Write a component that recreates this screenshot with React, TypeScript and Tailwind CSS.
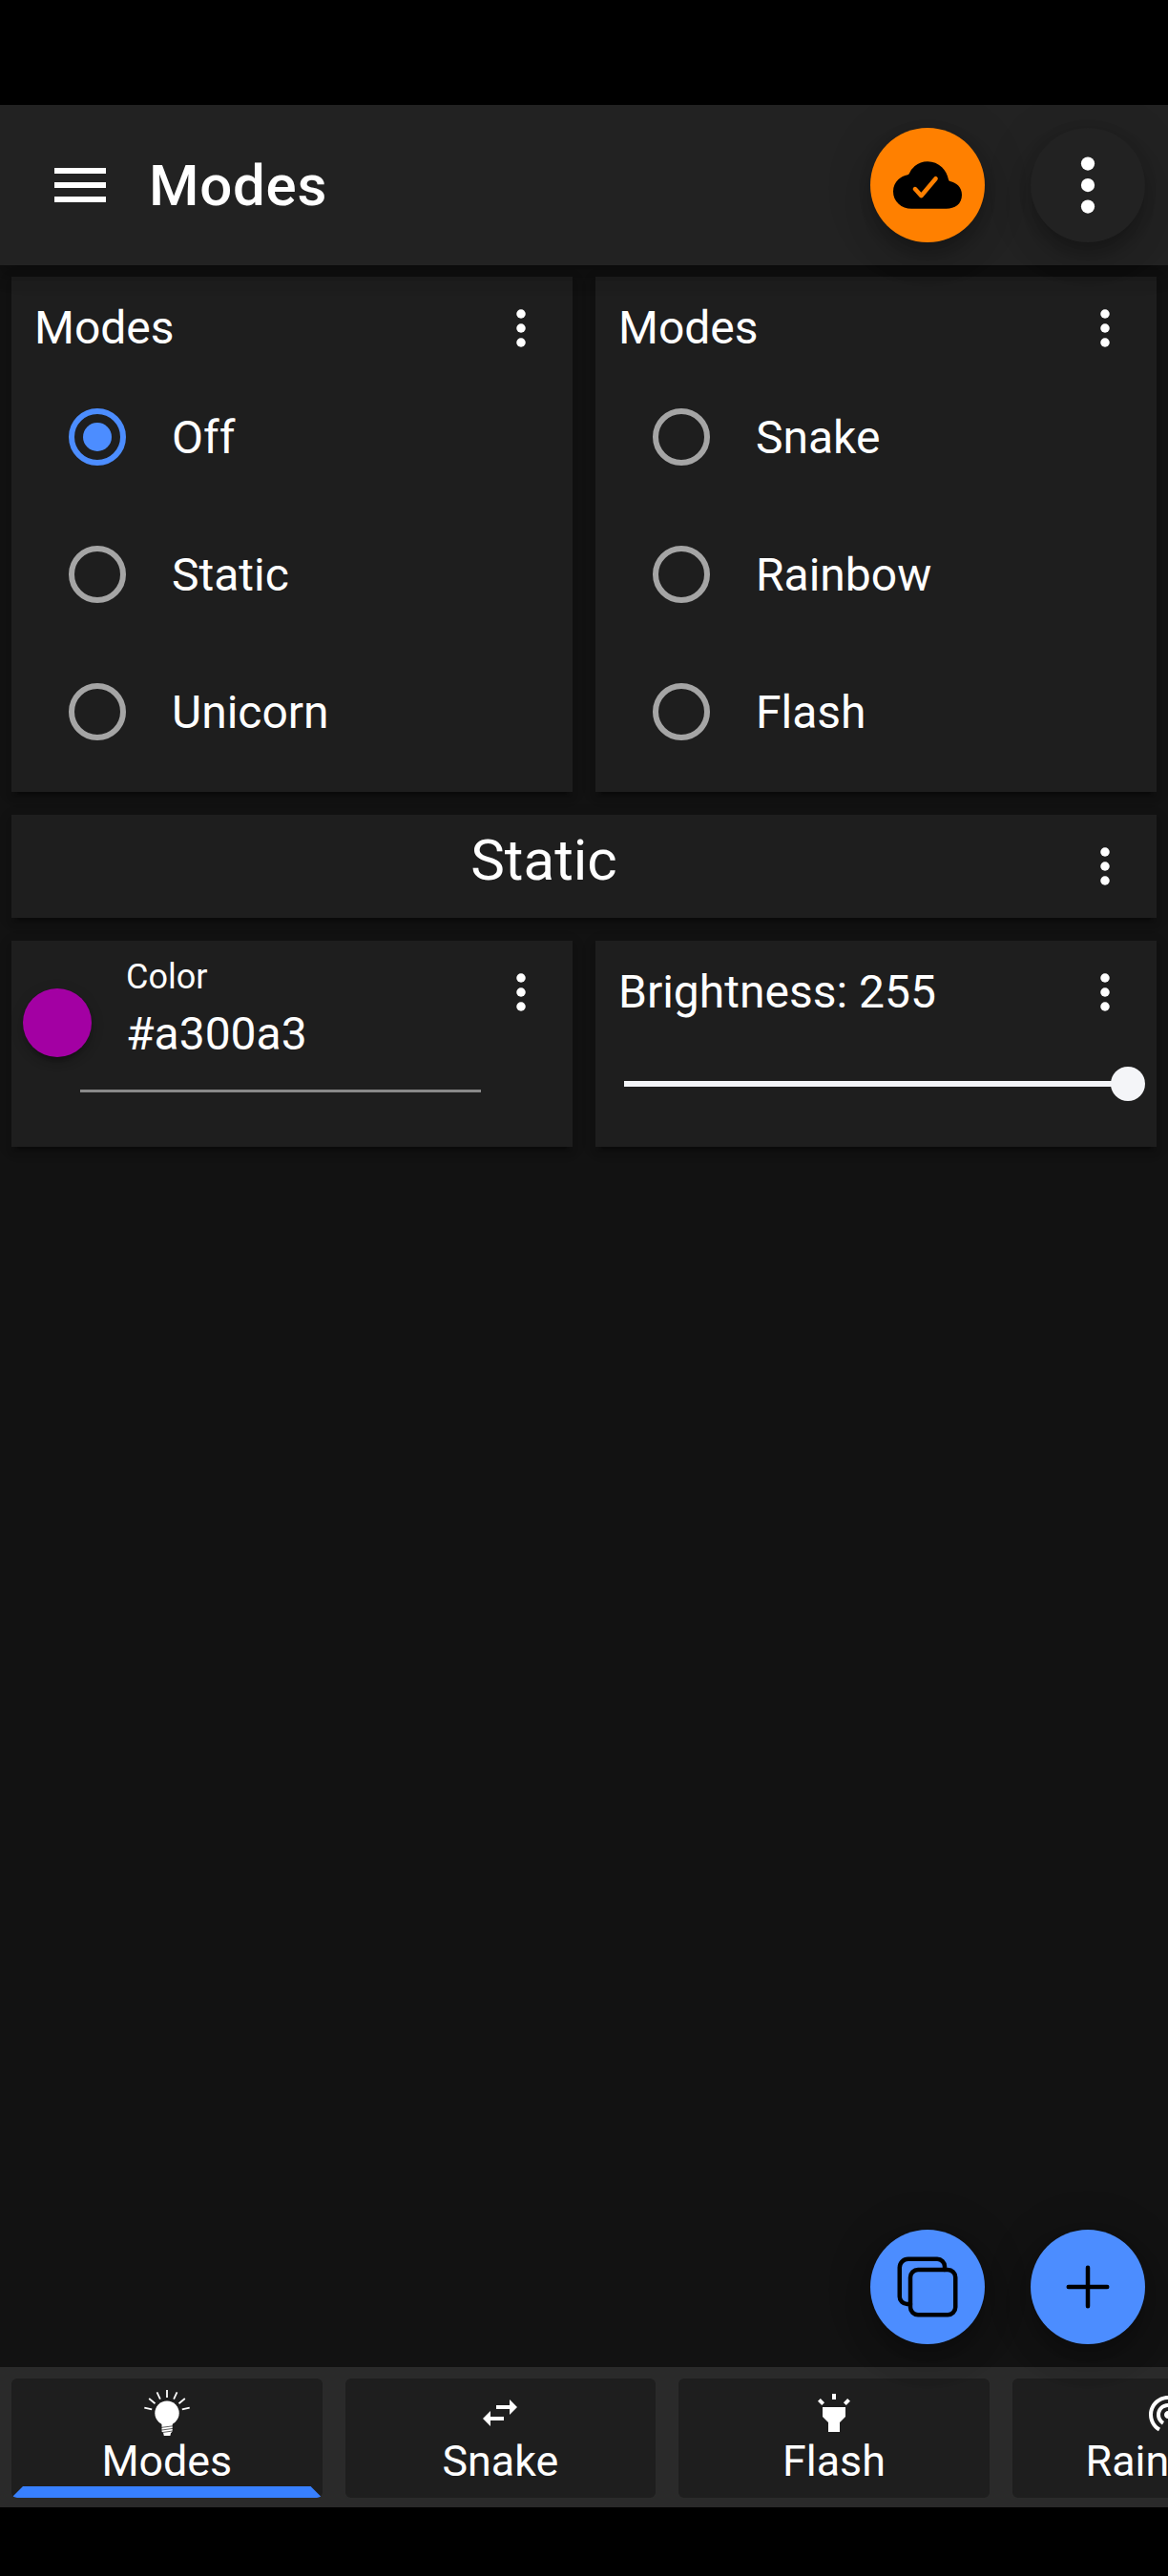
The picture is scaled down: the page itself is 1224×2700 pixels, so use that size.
import type { ReactNode } from "react";
import { IoAdd, IoCloudDone, IoCopyOutline } from "react-icons/io5";
import { MdHighlight, MdMenu, MdSwapHoriz, MdWifiTethering } from "react-icons/md";

const cardShadow =
  "shadow-[0_9px_3px_-6px_rgba(0,0,0,0.2),0_6px_6px_0_rgba(0,0,0,0.14),0_3px_15px_0_rgba(0,0,0,0.12)]";
const fabShadow =
  "shadow-[0_9px_15px_-3px_rgba(0,0,0,0.2),0_18px_30px_0_rgba(0,0,0,0.14),0_3px_54px_0_rgba(0,0,0,0.12)]";
const barShadow =
  "shadow-[0_6px_12px_-3px_rgba(0,0,0,0.2),0_12px_15px_0_rgba(0,0,0,0.14),0_3px_30px_0_rgba(0,0,0,0.12)]";

function Dots({ className }: { className: string }) {
  return (
    <svg viewBox="0 0 48 48" fill="currentColor" className={className}>
      <circle cx="24" cy="9" r="4.75" />
      <circle cx="24" cy="24" r="4.75" />
      <circle cx="24" cy="39" r="4.75" />
    </svg>
  );
}

function BulbIcon() {
  return (
    <svg viewBox="0 0 48 48" className="size-12">
      <path
        stroke="white"
        strokeWidth="1.8"
        d="M24 0v8M13.5 2.3l3.4 7.4M34.5 2.3l-3.4 7.4M5.2 9l6.3 5.2M42.8 9l-6.3 5.2M.3 18.7l7.9 1.7M47.7 18.7l-7.9 1.7"
      />
      <circle cx="24" cy="24.3" r="12.7" fill="white" />
      <path
        fill="white"
        d="M16.5 33.5c1.6 1.1 2 1.8 2 3.2v6.8l1.7 1.7.6 2.8h6.6l.6-2.8 1.7-1.7v-6.8c0-1.4.4-2.1 2-3.2z"
      />
      <path stroke="#1e1e1e" strokeWidth=".7" d="M18 39.4l12-1.6M18 42.1l12-1.7M18 44.7l12-1.7" />
    </svg>
  );
}

function MenuButton() {
  return (
    <button className="flex h-[84px] w-[84px] items-center justify-center">
      <Dots className="size-12" />
    </button>
  );
}

function Card({ className = "", children }: { className?: string; children: ReactNode }) {
  return <section className={`bg-[#1e1e1e] ${cardShadow} ${className}`}>{children}</section>;
}

function CardHeader({ title }: { title: string }) {
  return (
    <div className="flex h-[84px] items-center justify-between pr-3 pl-6">
      <h2 className="text-[48px] leading-none">{title}</h2>
      <MenuButton />
    </div>
  );
}

function ModeCard({ options, selected }: { options: string[]; selected?: string }) {
  return (
    <Card className="h-[540px] flex-1 pt-3">
      <CardHeader title="Modes" />
      {options.map((option) => (
        <div key={option} className="flex h-36 items-center gap-12 pl-15">
          {option === selected ? (
            <span className="flex size-15 items-center justify-center rounded-full border-6 border-[#4c8dff]">
              <span className="size-[30px] rounded-full bg-[#4c8dff]" />
            </span>
          ) : (
            <span className="size-15 rounded-full border-6 border-[#a5a5a5]" />
          )}
          <span className="pt-[2px] text-[48px] leading-none">{option}</span>
        </div>
      ))}
    </Card>
  );
}

function Fab({ className, children }: { className: string; children: ReactNode }) {
  return (
    <button className={`flex size-30 items-center justify-center rounded-full ${fabShadow} ${className}`}>
      {children}
    </button>
  );
}

function Tab({ label, icon, active }: { label: string; icon: ReactNode; active?: boolean }) {
  return (
    <div className="relative flex h-[125px] w-[325.6px] shrink-0 flex-col items-center overflow-hidden rounded-[6px] bg-[#1e1e1e] pt-3">
      {icon}
      <span className="mt-[4px] text-[44.8px] leading-[46px]">{label}</span>
      {active && (
        <span className="absolute inset-x-0 bottom-0 h-3 bg-[#3880ff] [clip-path:polygon(12px_0,calc(100%-12px)_0,100%_100%,0_100%)]" />
      )}
    </div>
  );
}

export default function App() {
  return (
    <div className="flex h-[2700px] w-[1224px] flex-col overflow-hidden bg-black font-['Roboto',sans-serif] text-white">
      <div className="h-[110px] shrink-0" />
      <header className={`relative z-10 flex h-[168px] shrink-0 items-center bg-[#222222] px-6 ${barShadow}`}>
        <button className="flex w-30 justify-center">
          <MdMenu className="size-[72px]" />
        </button>
        <h1 className="ml-3 flex-1 pt-[2px] text-[60px] leading-none font-medium tracking-[0.0125em]">Modes</h1>
        <div className="flex gap-12">
          <Fab className="bg-[#ff8000] text-black">
            <IoCloudDone className="size-[72px]" />
          </Fab>
          <Fab className="bg-[#222222]">
            <Dots className="size-[72px]" />
          </Fab>
        </div>
      </header>

      <main className="relative flex flex-1 flex-col gap-6 bg-[#121212] p-3">
        <div className="flex gap-6">
          <ModeCard options={["Off", "Static", "Unicorn"]} selected="Off" />
          <ModeCard options={["Snake", "Rainbow", "Flash"]} />
        </div>

        <Card className="flex h-[108px] items-center px-3">
          <h2 className="mb-[13px] flex-1 text-center text-[60px] leading-none">Static</h2>
          <MenuButton />
        </Card>

        <div className="flex gap-6">
          <Card className="flex h-[216px] flex-1 flex-col pt-3">
            <div className="flex items-start pr-3 pl-3">
              <span className="mt-[38px] size-[72px] rounded-full bg-[#a300a3] shadow-[0_9px_3px_-6px_rgba(0,0,0,0.2),0_6px_6px_0_rgba(0,0,0,0.14),0_3px_15px_0_rgba(0,0,0,0.12)]" />
              <div className="ml-9 flex h-[110px] flex-1 flex-col pt-[8px]">
                <span className="text-[36px] leading-[36px]">Color</span>
                <span className="mt-[18px] text-[48px] leading-[48px]">#a300a3</span>
              </div>
              <MenuButton />
            </div>
            <div className="mt-[34px] ml-[72px] h-[3px] w-[420px] bg-[#898989]" />
          </Card>

          <Card className="h-[216px] flex-1 pt-3">
            <CardHeader title="Brightness: 255" />
            <div className="mt-9 mr-3 ml-[30px] flex items-center">
              <div className="h-[6px] flex-1 bg-[#f4f5f8]" />
              <div className="-ml-px size-9 rounded-full bg-[#f4f5f8]" />
            </div>
          </Card>
        </div>

        <div className="absolute right-6 bottom-6 z-10 flex gap-12 text-black">
          <Fab className="bg-[#4c8dff]">
            <IoCopyOutline className="size-[72px]" />
          </Fab>
          <Fab className="bg-[#4c8dff]">
            <IoAdd className="size-[72px]" />
          </Fab>
        </div>
      </main>

      <nav className="flex h-[147px] shrink-0 gap-6 overflow-hidden bg-[#2a2a2a] p-3 shadow-[0_3px_30px_0_rgba(0,0,0,0.25)]">
        <Tab label="Modes" icon={<BulbIcon />} active />
        <Tab label="Snake" icon={<MdSwapHoriz className="size-12" />} />
        <Tab label="Flash" icon={<MdHighlight className="size-12" />} />
        <Tab label="Rainbow" icon={<MdWifiTethering className="size-12" />} />
      </nav>
      <div className="h-[72px] shrink-0" />
    </div>
  );
}
